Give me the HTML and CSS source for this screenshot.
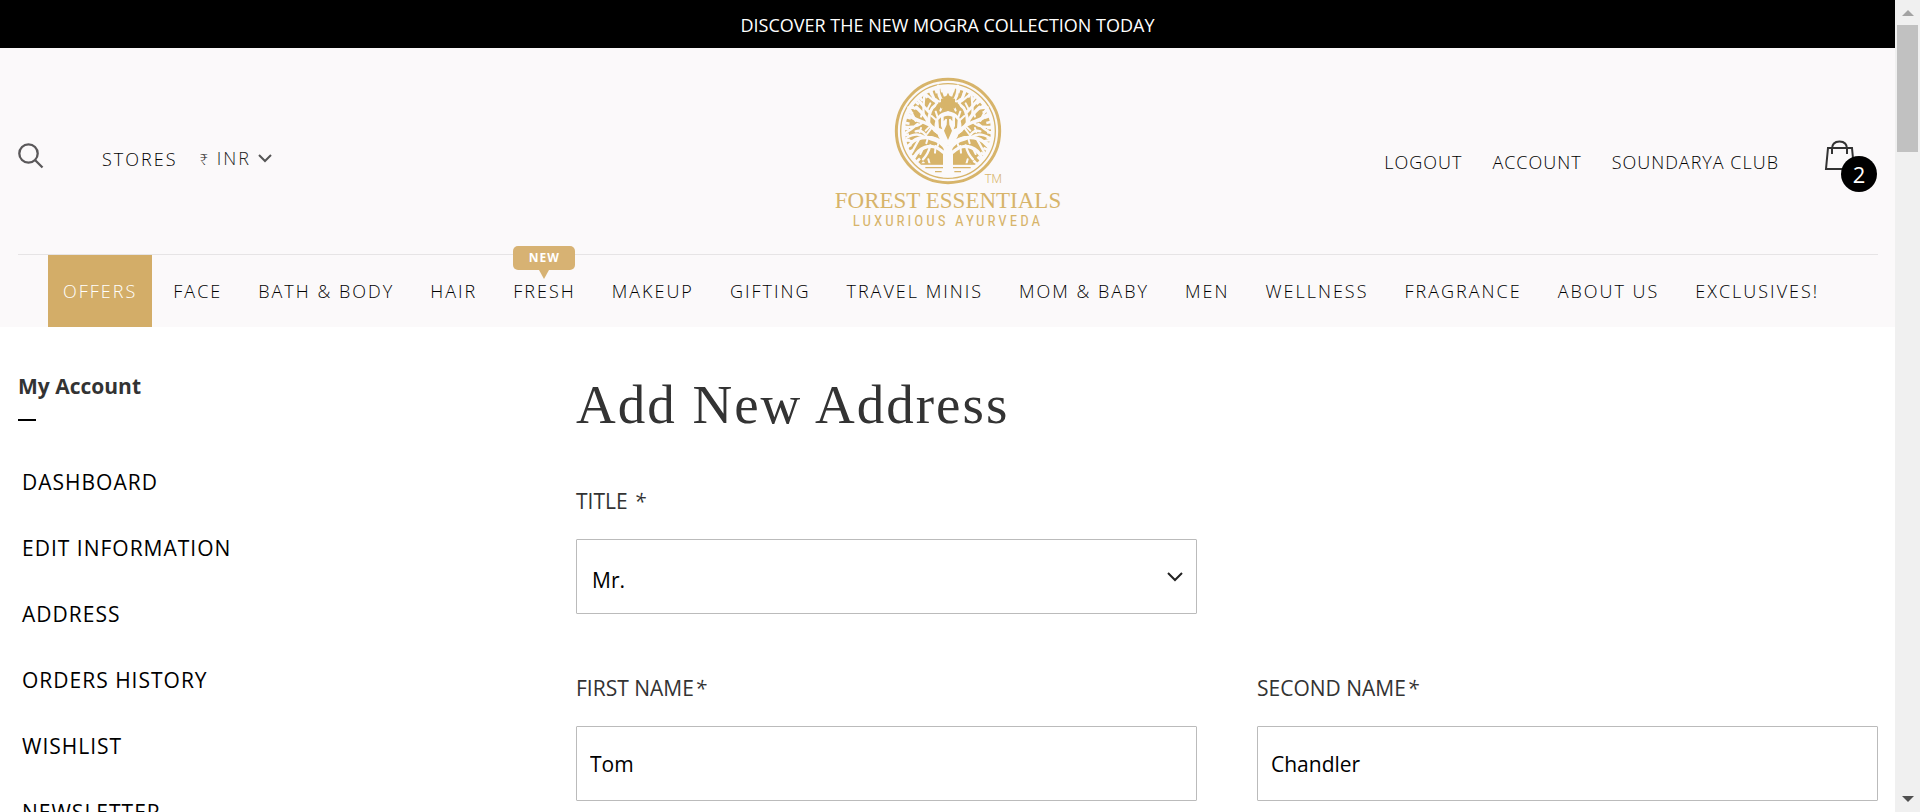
FILE: index.html
```html
<!DOCTYPE html>
<html lang="en">
<head>
<meta charset="utf-8">
<title>Add New Address - Forest Essentials</title>
<link rel="stylesheet" href="styles.css">
</head>
<body>
<div class="window">
<div class="page">
  <div class="announcement">DISCOVER THE NEW MOGRA COLLECTION TODAY</div>

  <header class="header">
    <div class="header-top">
      <div class="header-left">
        <button class="icon-button" type="button" aria-label="Search">
          <svg width="26" height="26" viewBox="0 0 26 26" fill="none" stroke="#5a585a" stroke-width="2.300"><circle cx="10.500" cy="10.500" r="9.200"/><path d="M17 17l7.500 7.500"/></svg>
        </button>
        <a class="stores" href="#">STORES</a>
        <button class="currency" type="button"><span><span class="rupee">₹</span> INR</span>
          <svg width="14" height="9" viewBox="0 0 14 9" fill="none" stroke="#555" stroke-width="2"><path d="M1 1l6 6 6-6"/></svg>
        </button>
      </div>

      <a class="logo" href="#" aria-label="Forest Essentials">
        <span class="emblem">
          <svg width="108" height="108" viewBox="219 21 324 324">
            <defs>
              <clipPath id="crown"><path d="M240 20H522V283H240z"/></clipPath>
              <g id="half" fill="none" stroke="#fbf9fa" stroke-linecap="round" stroke-linejoin="round">
                <path stroke-width="14" d="M378 300V262Q378 225 358 196 M378 240Q365 212 330 205"/>
                <path stroke-width="10" d="M366 212Q350 172 306 156Q282 150 262 134 M358 192Q340 182 322 158Q316 140 286 112 M340 206Q300 196 276 214L258 232 M366 246Q340 222 312 232Q290 240 280 262"/>
                <path stroke-width="9" d="M323 160Q322 118 345 104 M345 172Q344 134 381 128 M352 106Q336 86 330 62 M324 126Q304 106 290 88 M366 94Q350 80 352 48"/>
                <path stroke-width="7" d="M306 156Q290 174 250 170 M290 162Q274 176 252 190 M306 199Q286 186 256 204 M318 203Q306 176 284 184 M296 204Q284 226 272 248 M328 226Q322 252 306 268 M308 132Q306 118 310 78 M290 116L262 112 M284 152L268 120 M338 92L316 74 M276 214L254 210 M344 88Q352 98 366 94"/>
                <path stroke-width="6" d="M345 150L332 138 M350 142L344 124 M362 112L358 122 M340 182L350 190 M326 170L314 182 M330 176L318 192 M350 228L354 214 M320 206L316 220 M300 140L304 128 M318 120L328 100 M300 174L296 186 M306 236L298 252 M344 228L342 248 M326 282L322 268"/>
              </g>
            </defs>
            <circle cx="381" cy="183" r="155" fill="none" stroke="#d7b46a" stroke-width="9"/>
            <circle cx="381" cy="183" r="142" fill="none" stroke="#d7b46a" stroke-width="4"/>
            <g clip-path="url(#crown)">
              <circle cx="381" cy="183" r="129" fill="#d7b46a"/>
              <circle cx="381" cy="183" r="124" fill="none" stroke="#fbf9fa" stroke-width="13" stroke-dasharray="8 9"/>
            </g>
            <path d="M345 176Q344 130 381 128Q418 130 417 176L390 226H372z M358 50H404L392 84 404 98H358L370 84z" fill="#fbf9fa"/>
            <use href="#half"/>
            <use href="#half" transform="translate(762 0) scale(-1 1)"/>
            <path d="M381 68l5 10 8 2v6h8v10q16 4 18 26l-9-2-6-9-6 6-6-8q-6-4-12-4t-12 4l-6 8-6-6-6 9-9 2q2-22 18-26v-10h8v-6l8-2z" fill="#d7b46a"/>
            <path d="M368 140q13-5 26 0v14l-6-8-4 2 1 16 8 18-12 28-12-28 8-18 1-16-4-2-6 8z" fill="#d7b46a"/>
            <path d="M352 150l8-8v26l4 10-10-4z M410 150l-8-8v26l-4 10 10-4z" fill="#d7b46a"/>
            <path d="M299 282h67M396 282h67M313 293h53M396 293h53M342 305h20M400 305h20" fill="none" stroke="#d7b46a" stroke-width="4"/>
            <path d="M366 322V250L372 226H390L396 250V322z" fill="#fbf9fa"/>
          </svg>
          <span class="tm">TM</span>
        </span>
        <span class="brand">FOREST ESSENTIALS</span>
        <span class="tagline">LUXURIOUS AYURVEDA</span>
      </a>

      <div class="header-right">
        <a href="#">LOGOUT</a>
        <a href="#">ACCOUNT</a>
        <a href="#">SOUNDARYA CLUB</a>
        <a class="bag" href="#" aria-label="Shopping bag, 2 items">
          <svg width="32" height="32" viewBox="0 0 32 32" fill="none" stroke="#333" stroke-width="2"><path d="M4 8h24l2 21H2z"/><path d="M8 14V9q0-7.500 7.500-7.500T23 9v5"/></svg>
          <span class="bag-count">2</span>
        </a>
      </div>
    </div>

    <nav class="nav">
      <a class="nav-link offers" href="#">OFFERS</a>
      <a class="nav-link" href="#">FACE</a>
      <a class="nav-link" href="#">BATH &amp; BODY</a>
      <a class="nav-link" href="#">HAIR</a>
      <a class="nav-link" href="#">FRESH<span class="new-tag">NEW</span></a>
      <a class="nav-link" href="#">MAKEUP</a>
      <a class="nav-link" href="#">GIFTING</a>
      <a class="nav-link" href="#">TRAVEL MINIS</a>
      <a class="nav-link" href="#">MOM &amp; BABY</a>
      <a class="nav-link" href="#">MEN</a>
      <a class="nav-link" href="#">WELLNESS</a>
      <a class="nav-link" href="#">FRAGRANCE</a>
      <a class="nav-link" href="#">ABOUT US</a>
      <a class="nav-link" href="#">EXCLUSIVES!</a>
    </nav>
  </header>

  <div class="content">
    <aside class="sidebar">
      <h2 class="sidebar-title">My Account</h2>
      <ul class="menu">
        <li><a href="#">DASHBOARD</a></li>
        <li><a href="#">EDIT INFORMATION</a></li>
        <li><a href="#">ADDRESS</a></li>
        <li><a href="#">ORDERS HISTORY</a></li>
        <li><a href="#">WISHLIST</a></li>
        <li><a href="#">NEWSLETTER</a></li>
      </ul>
    </aside>

    <main class="main">
      <h1 class="heading">Add New Address</h1>
      <form class="form">
        <div class="field field-title">
          <label for="title">TITLE <em>*</em></label>
          <div class="select-wrap">
            <select id="title"><option>Mr.</option><option>Mrs.</option><option>Ms.</option></select>
            <svg class="select-arrow" width="16" height="10" viewBox="0 0 16 10" fill="none" stroke="#222" stroke-width="2"><path d="M1 1l7 7 7-7"/></svg>
          </div>
        </div>
        <div class="field">
          <label for="first">FIRST NAME<em>*</em></label>
          <input id="first" type="text" value="Tom">
        </div>
        <div class="field">
          <label for="second">SECOND NAME<em>*</em></label>
          <input id="second" type="text" value="Chandler">
        </div>
      </form>
    </main>
  </div>
</div>

<div class="scrollbar" aria-hidden="true">
  <svg width="12" height="6" viewBox="0 0 12 6"><path d="M0 6L6 0l6 6z" fill="#a3a3a3"/></svg>
  <div class="scroll-thumb"></div>
  <svg class="scroll-down" width="12" height="6" viewBox="0 0 12 6"><path d="M0 0l6 6 6-6z" fill="#505050"/></svg>
</div>
</div>
</body>
</html>
```

FILE: styles.css
```css
* { box-sizing: border-box; }

body {
  margin: 0;
  background: #fff;
  color: #333;
  font-family: "Open Sans", "Noto Sans", sans-serif;
  font-size: 18px;
  line-height: 24px;
}

a { color: inherit; text-decoration: none; }
button { border: 0; padding: 0; background: none; font: inherit; color: inherit; letter-spacing: inherit; }
svg { display: block; }

.window { display: flex; height: 100vh; overflow: hidden; }
.page { flex: 1; min-width: 0; overflow: hidden; }

.announcement {
  padding: 13px 0 11px;
  background: #000;
  color: #fff;
  text-align: center;
  font-weight: 500;
}

.header { background: #fbf9fa; padding: 0 17px 0 18px; }
.header-top {
  display: grid;
  grid-template-columns: 1fr auto 1fr;
  align-items: start;
  padding: 29px 0 25px;
  border-bottom: 1px solid #e6e4e5;
}
.header-left { display: flex; align-items: center; padding-top: 69px; letter-spacing: 2px; font-weight: 300; }
.icon-button { margin: -6px 58px 0 0; }
.stores { color: #000; margin-right: 22px; }
.currency { display: flex; align-items: center; gap: 7px; color: #222; }
.rupee { font-size: 15px; }

.logo { display: flex; flex-direction: column; align-items: center; color: #d7b46a; }
.emblem { position: relative; }
.tm { position: absolute; right: 0; bottom: 0; font: 300 12px/12px Roboto, sans-serif; }
.brand { font: 23px/24px "Liberation Serif", serif; margin-top: 4px; white-space: nowrap; }
.tagline { font: 15px/16px "Roboto Condensed", Roboto, sans-serif; letter-spacing: 3px; }

.header-right {
  display: flex;
  justify-content: flex-end;
  align-items: flex-end;
  gap: 30px;
  padding-top: 63px;
  color: #000;
  letter-spacing: 1px;
  font-weight: 300;
}
.bag { position: relative; width: 54px; margin-left: 15px; padding-bottom: 2px; }
.bag-count {
  position: absolute;
  top: 16px;
  right: 1px;
  width: 36px;
  border-radius: 50%;
  background: #000;
  color: #fff;
  font-size: 22px;
  font-weight: 400;
  line-height: 36px;
  text-align: center;
  letter-spacing: 0;
}

.nav { display: flex; gap: 6px; padding-left: 30px; letter-spacing: 2px; font-weight: 300; color: #000; }
.nav-link { position: relative; padding: 24px 15px; white-space: nowrap; }
.offers { background: #d3ad68; color: #fff; }
.new-tag {
  position: absolute;
  top: -9px;
  left: 15px;
  width: 62px;
  border-radius: 5px;
  background: #d7b273;
  color: #fff;
  font-size: 12px;
  font-weight: 700;
  line-height: 24px;
  text-align: center;
  letter-spacing: 1px;
}
.new-tag::after {
  content: "";
  position: absolute;
  top: 24px;
  left: 26px;
  border: 5px solid transparent;
  border-top: 9px solid #d7b273;
  border-bottom: 0;
}

.content { display: grid; grid-template-columns: 3fr 7fr; padding: 0 17px 0 18px; }

.sidebar-title { margin: 44px 0 0; font-size: 21px; font-weight: 700; line-height: 30px; }
.sidebar-title::after { content: ""; display: block; width: 18px; height: 2px; margin-top: 18px; background: #000; }
.menu { list-style: none; margin: 28px 0 0; padding: 0 4px; color: #000; font-size: 21px; letter-spacing: 1px; line-height: 66px; }

.heading { margin: 48px 0 0; font: 55px/60px "Liberation Serif", serif; letter-spacing: 2px; }
.form { display: grid; grid-template-columns: 1fr 1fr; column-gap: 60px; row-gap: 59px; margin-top: 51px; font-size: 21px; }
.field-title { grid-column: 1 / 2; }
.field:nth-child(2) { grid-column: 1; }
.field label { display: block; margin-bottom: 23px; line-height: 30px; }
.field em { margin-left: 1px; }
.select-wrap { position: relative; }
.select-arrow { position: absolute; right: 14px; top: 33px; pointer-events: none; }
.field select, .field input {
  display: block;
  width: 100%;
  height: 75px;
  border: 1px solid #bbb;
  border-radius: 1px;
  background: #fff;
  color: #000;
  font: inherit;
}
.field input { padding: 0 13px; }
.field select { appearance: none; padding: 7px 15px 0; }

.scrollbar {
  display: flex;
  flex-direction: column;
  align-items: center;
  width: 25px;
  padding: 10px 0;
  background: #f0f0f0;
}
.scroll-thumb { width: 21px; height: 127px; margin-top: 9px; background: #c1c1c1; }
.scroll-down { margin-top: auto; }
```
